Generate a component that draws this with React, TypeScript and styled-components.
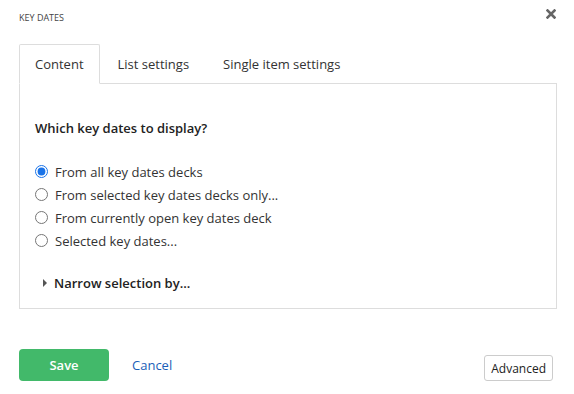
import React, { useState } from 'react'
import styled, { createGlobalStyle } from 'styled-components'

const GlobalStyle = createGlobalStyle`
  html, body {
    margin: 0;
    padding: 0;
    background: #fff;
  }
  body {
    font-family: "Open Sans", "Liberation Sans", sans-serif;
    color: #333;
  }
`

const tabs = ['Content', 'List settings', 'Single item settings']

const options = [
  'From all key dates decks',
  'From selected key dates decks only...',
  'From currently open key dates deck',
  'Selected key dates...'
]

export default function App () {
  const [activeTab, setActiveTab] = useState(0)
  const [choice, setChoice] = useState(0)

  return (
    <Dialog>
      <GlobalStyle />
      <Header>
        <Title>Key dates</Title>
        <Close aria-label='Close'>
          <svg width='10' height='10' viewBox='0 0 10 10'>
            <path d='M1.5 1.5 L8.5 8.5 M8.5 1.5 L1.5 8.5' stroke='#666' strokeWidth='2.6' strokeLinecap='square' />
          </svg>
        </Close>
      </Header>

      <TabList>
        {tabs.map((tab, i) => (
          <Tab key={tab} active={i === activeTab} onClick={() => setActiveTab(i)}>
            {tab}
          </Tab>
        ))}
      </TabList>

      <Panel>
        <Heading>Which key dates to display?</Heading>
        <Options>
          {options.map((option, i) => (
            <Option key={option}>
              <Radio
                type='radio'
                name='keydates'
                checked={choice === i}
                onChange={() => setChoice(i)}
              />
              {option}
            </Option>
          ))}
        </Options>
        <Toggle>
          <Caret />
          Narrow selection by...
        </Toggle>
      </Panel>

      <Footer>
        <SaveButton>Save</SaveButton>
        <CancelLink href='#'>Cancel</CancelLink>
        <AdvancedButton>Advanced</AdvancedButton>
      </Footer>
    </Dialog>
  )
}

const Dialog = styled.div`
  width: 574px;
  height: 394px;
  box-sizing: border-box;
  padding: 0 17px 0 19px;
`

const Header = styled.div`
  display: flex;
  justify-content: space-between;
  align-items: center;
  height: 30px;
  padding-top: 2px;
  margin-bottom: 12px;
`

const Title = styled.div`
  font-size: 9px;
  text-transform: uppercase;
  color: #444;
`

const Close = styled.button`
  border: 0;
  background: none;
  padding: 0;
  margin-right: 1px;
  margin-top: -6px;
  line-height: 0;
  cursor: pointer;
`

const TabList = styled.div`
  display: flex;
  border-bottom: 1px solid #ddd;
`

const Tab = styled.div<{ active: boolean }>`
  padding: 0 15px;
  height: 38px;
  line-height: 38px;
  font-size: 13px;
  margin-right: 2px;
  margin-bottom: -1px;
  border: 1px solid ${p => (p.active ? '#ddd' : 'transparent')};
  border-bottom-color: ${p => (p.active ? '#fff' : 'transparent')};
  border-radius: 2px 2px 0 0;
  background: ${p => (p.active ? '#fff' : 'transparent')};
  color: #333;
  cursor: pointer;
`

const Panel = styled.div`
  border: 1px solid #ddd;
  border-top: 0;
  padding: 35px 15px 16px;
`

const Heading = styled.div`
  font-size: 13px;
  font-weight: 600;
  line-height: 18px;
  color: #222;
`

const Options = styled.div`
  margin: 23px 0 22px;
  display: flex;
  flex-direction: column;
`

const Option = styled.label`
  display: flex;
  align-items: center;
  height: 23px;
  font-size: 13px;
  color: #333;
`

const Radio = styled.input`
  width: 13px;
  height: 13px;
  margin: 0 7px 0 0;
  accent-color: #1a73e8;
`

const Toggle = styled.div`
  display: flex;
  align-items: center;
  padding-left: 8px;
  font-size: 13px;
  font-weight: 600;
  line-height: 18px;
  color: #222;
`

const Caret = styled.span`
  width: 0;
  height: 0;
  border-top: 4px solid transparent;
  border-bottom: 4px solid transparent;
  border-left: 4px solid #555;
  margin-right: 7px;
`

const Footer = styled.div`
  display: flex;
  align-items: flex-end;
  margin-top: 40px;
  padding-right: 4px;
`

const SaveButton = styled.button`
  width: 90px;
  height: 32px;
  border: 0;
  border-radius: 4px;
  background: #42b96a;
  color: #fff;
  font-family: inherit;
  font-size: 13px;
  font-weight: 600;
  cursor: pointer;
`

const CancelLink = styled.a`
  align-self: center;
  margin-left: 23px;
  font-size: 13px;
  color: #1a5eb8;
  text-decoration: none;
`

const AdvancedButton = styled.button`
  margin-left: auto;
  height: 26px;
  padding: 0 6px;
  border: 1px solid #ccc;
  border-radius: 3px;
  background: #fff;
  color: #222;
  font-family: inherit;
  font-size: 12px;
  cursor: pointer;
`
